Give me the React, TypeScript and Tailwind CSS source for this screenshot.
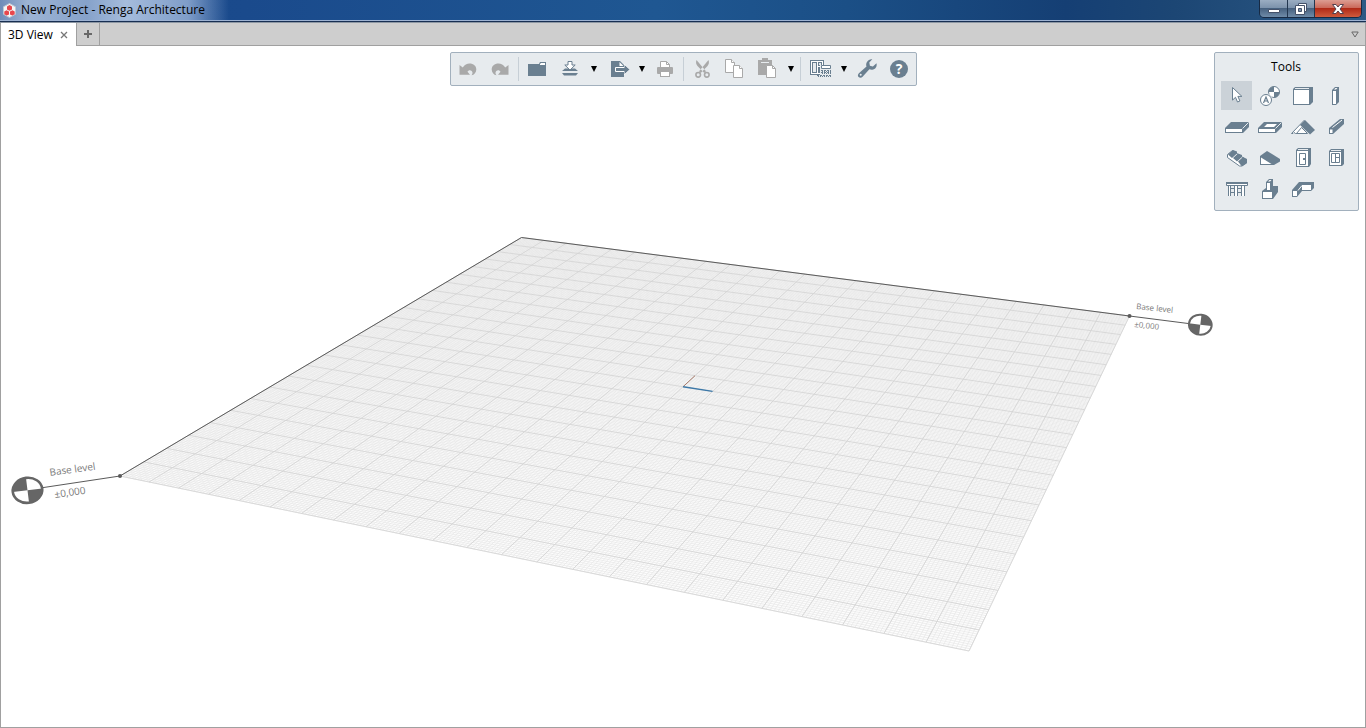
import { ReactNode, useState } from 'react';

type Point = [number, number];

interface Tool {
  id: string;
  label: string;
  icon: ReactNode;
}

const SLATE = '#6a7f90';
const GRAY = '#a9a9a9';

// Corners of the base level plane: back, right, front, left
const CORNERS: Point[] = [[521.5, 237.5], [1129.5, 316], [969, 651], [120, 476]];
const CELLS = 24;
const SUBCELLS = 10;

// Perspective projection of the unit square onto the plane
function createProjection([p0, p1, p2, p3]: Point[]) {
  const dx1 = p1[0] - p2[0];
  const dy1 = p1[1] - p2[1];
  const dx2 = p3[0] - p2[0];
  const dy2 = p3[1] - p2[1];
  const dx3 = p0[0] - p1[0] + p2[0] - p3[0];
  const dy3 = p0[1] - p1[1] + p2[1] - p3[1];
  const det = dx1 * dy2 - dx2 * dy1;
  const g = (dx3 * dy2 - dx2 * dy3) / det;
  const h = (dx1 * dy3 - dx3 * dy1) / det;
  return (u: number, v: number): Point => {
    const w = 1 + g * u + h * v;
    return [
      ((p1[0] - p0[0] + g * p1[0]) * u + (p3[0] - p0[0] + h * p3[0]) * v + p0[0]) / w,
      ((p1[1] - p0[1] + g * p1[1]) * u + (p3[1] - p0[1] + h * p3[1]) * v + p0[1]) / w,
    ];
  };
}

const project = createProjection(CORNERS);

function segment(u1: number, v1: number, u2: number, v2: number) {
  const [x1, y1] = project(u1, v1);
  const [x2, y2] = project(u2, v2);
  return `M${x1.toFixed(2)} ${y1.toFixed(2)}L${x2.toFixed(2)} ${y2.toFixed(2)}`;
}

function gridPath(count: number) {
  let d = '';
  for (let i = 0; i <= count; i++) {
    const t = i / count;
    d += segment(t, 0, t, 1) + segment(0, t, 1, t);
  }
  return d;
}

const minorGrid = gridPath(CELLS * SUBCELLS);
const majorGrid = gridPath(CELLS);

const undoPath =
  'M7.5 12l3.3 2.6C12.4 12 15 10.5 17.5 10.5c4 0 6.8 2.6 6.8 5.9 0 3-2 5.4-4.8 5.8 1.2-1.4 1.4-3.2.2-4.3-1.5-1.2-3.6-.6-4.2.9L18 21.8H7.5z';

const icons = {
  undo: <path d={undoPath} fill={GRAY} />,
  redo: <path d={undoPath} fill={GRAY} transform="translate(32 0) scale(-1 1)" />,
  open: (
    <>
      <path d="M7 11h11l1-2h6v14H7z" fill={SLATE} />
      <path d="M19 12v-1l1-1h4v2z" fill="#fff" />
    </>
  ),
  import: (
    <>
      <path d="M9 18l3-2.5h10l3 2.5zM9 20h16l-2 2.500H11z" fill={SLATE} />
      <path d="M15 8.5h4v3.5h3.2L17 17l-5.2-5H15z" fill="#fff" stroke={SLATE} />
    </>
  ),
  export: (
    <>
      <path d="M10 8h9l4 4v12H10z" fill={SLATE} />
      <path d="M18.5 9v4h4z" fill="#fff" />
      <path d="M14.5 14.5h9v-3l5 5-5 5v-3h-9z" fill={SLATE} stroke="#fff" />
      <path d="M23.500 12v9l5-4.500z" fill={SLATE} />
    </>
  ),
  print: (
    <>
      <path d="M11.5 14V8.5h6l3 3V14" fill="#fff" stroke={GRAY} />
      <path d="M17.5 8.5v3h3" fill="none" stroke={GRAY} />
      <rect x="8" y="14" width="16" height="7" rx="1" fill={GRAY} />
      <rect x="11.5" y="18.5" width="9" height="5" fill="#fff" stroke={GRAY} />
    </>
  ),
  cut: (
    <>
      <path d="M10.500 7c-1 2.500-.2 4.500 1 6l6.800 7 1.700-1.700zM22.500 7c1 2.500.2 4.500-1 6l-6.800 7-1.700-1.700z" fill={GRAY} />
      <circle cx="12.200" cy="21.800" r="2.300" fill="none" stroke={GRAY} strokeWidth="1.600" />
      <circle cx="20.800" cy="21.800" r="2.300" fill="none" stroke={GRAY} strokeWidth="1.600" />
    </>
  ),
  copy: (
    <g fill="#fff" stroke={GRAY}>
      <path d="M7.5 6.5h6l3 3v10h-9z" />
      <path d="M13.5 6.5v3h3" />
      <path d="M15.5 12.5h6l3 3v9h-9z" />
      <path d="M21.5 12.5v3h3" />
    </g>
  ),
  paste: (
    <>
      <path d="M8 7h4V5h6v2h4v15H8z" fill={GRAY} />
      <path d="M11 9.5h8" stroke="#e7ebee" />
      <path d="M16.500 12.500h6l3 3v9h-9z" fill="#fff" stroke={GRAY} />
      <path d="M22.500 12.500v3h3" fill="none" stroke={GRAY} />
    </>
  ),
  styles: (
    <>
      <path d="M7 7h14v15H7z" fill={SLATE} />
      <path d="M8 8h12v13H8z" fill="#fff" />
      <path d="M9 9h5v11H9zM15 9h4v4h-4zM15 14h4v6h-4z" fill={SLATE} />
      <path d="M10 10h3v9h-3zM16 10h2v2h-2z" fill="#e7ebee" />
      <path d="M17 12h11v12H17z" fill="#e7ebee" />
      <path d="M18.5 12.500h9v3h-9z" fill="#fff" stroke={SLATE} />
      <path d="M18 17.500h10M18 19.500h10M14 22.500h14" stroke={SLATE} strokeDasharray="2 1" />
      <path d="M19 18.500h9M19 20.500h9M15 23.500h13" stroke={SLATE} strokeDasharray="1 1" />
    </>
  ),
  settings: (
    <path
      d="M21.3 6.3l-3 3.3.6 3.2 3 .6 3.6-3.2c.8 3.2-1 6.2-4.3 6.500-1 .1-2-.1-2.800-.4l-6.800 7.500c-1.300 1.300-3 1.200-4 .2-1-1.100-.9-2.700.3-3.800l7.600-6.600c-1.300-3.600 1.800-8 5.800-7.300zM9.700 20.800a1 1 0 100 2 1 1 0 000-2z"
      fill={SLATE}
      fillRule="evenodd"
    />
  ),
  help: (
    <>
      <circle cx="16" cy="16" r="9" fill={SLATE} />
      <text x="16" y="21" textAnchor="middle" fontSize="14" fontWeight="700" fill="#fff">?</text>
    </>
  ),
};

const tools: Tool[] = [
  {
    id: 'select',
    label: 'Select',
    icon: <path d="M11.5 6.5v12.6l3-2.8 2 4.7 2.4-1-2-4.6h4z" fill="#fff" stroke={SLATE} />,
  },
  {
    id: 'level',
    label: 'Level',
    icon: (
      <>
        <circle cx="20" cy="11" r="5.5" fill="#fff" stroke={SLATE} />
        <path d="M20 11V5.5A5.5 5.5 0 0014.5 11zM20 11v5.5a5.5 5.5 0 005.5-5.5z" fill={SLATE} />
        <circle cx="12" cy="19" r="6.8" fill="#e7ebee" />
        <circle cx="12" cy="19" r="5.5" fill="#fff" stroke={SLATE} />
        <path d="M9.5 22L12 16l2.5 6M10.500 20h3" fill="none" stroke={SLATE} strokeWidth="1.2" />
      </>
    ),
  },
  {
    id: 'wall',
    label: 'Wall',
    icon: (
      <>
        <path d="M6 8l2-2h18v15l-3 3H6z" fill={SLATE} />
        <path d="M7 9h15v14H7z" fill="#fff" />
        <path d="M8 7.500h14" stroke="#e7ebee" />
      </>
    ),
  },
  {
    id: 'column',
    label: 'Column',
    icon: (
      <>
        <path d="M12 9l3-3h4v15l-3 3h-4z" fill={SLATE} />
        <path d="M13 10h3v13h-3z" fill="#fff" />
        <path d="M14 8.500l1.500-1.500h2l-1.500 1.500z" fill="#fff" />
      </>
    ),
  },
  {
    id: 'floor',
    label: 'Floor',
    icon: (
      <>
        <path d="M4 16l6-6h18v5l-6 6H4z" fill={SLATE} />
        <path d="M5 17h16v3H5z" fill="#fff" />
        <path d="M21.500 16.500l6-6" stroke="#e7ebee" />
      </>
    ),
  },
  {
    id: 'opening',
    label: 'Opening',
    icon: (
      <>
        <path d="M4 16l6-6h18v5l-6 6H4z" fill={SLATE} />
        <path d="M5 17h16v3H5zM10 15l3-3h10l-3 3z" fill="#fff" />
        <path d="M21.500 16.500l6-6" stroke="#e7ebee" />
      </>
    ),
  },
  {
    id: 'roof',
    label: 'Roof',
    icon: (
      <>
        <path d="M4.500 21.500L17 8.500l3 3-9.500 10h-2l-1.500-1-1 1z" fill="#fff" stroke={SLATE} />
        <path d="M9.500 21.500l5-6 6 6z" fill="#fff" stroke={SLATE} />
        <path d="M13 13l5-5 10 10-5 4.500z" fill={SLATE} />
      </>
    ),
  },
  {
    id: 'beam',
    label: 'Beam',
    icon: (
      <>
        <path d="M9 16L20 7h4v5L13 22H9z" fill={SLATE} />
        <path d="M10 17.5h2.5V21H10z" fill="#fff" />
        <path d="M12.5 15.5L22 8" stroke="#fff" />
      </>
    ),
  },
  {
    id: 'stair',
    label: 'Stair',
    icon: (
      <>
        <path d="M6.500 11.500l5-4 14 9.500v3l-5 3h-2l-12-8.500z" fill="#fff" stroke={SLATE} />
        <path d="M7 11.500L12 7l4 1.500v2L11 15zM12 15l5-4.500 4 1.500v2L16 18.500zM17 18.500l5-4.500 4 2v4l-5 3.500z" fill={SLATE} />
      </>
    ),
  },
  {
    id: 'ramp',
    label: 'Ramp',
    icon: (
      <>
        <path d="M6 13l7-5 13 8v2.500L20 22H6z" fill={SLATE} />
        <path d="M7 14.500L17.500 21H7z" fill="#fff" />
      </>
    ),
  },
  {
    id: 'door',
    label: 'Door',
    icon: (
      <>
        <path d="M9 7l2-2h13v16l-2 3H9z" fill={SLATE} />
        <path d="M10 8h11v15H10z" fill="#fff" />
        <path d="M12.500 10.500h6v11h-6z" fill="none" stroke={SLATE} />
        <path d="M16 15h2v2h-2z" fill={SLATE} />
        <path d="M11 6.500h10" stroke="#e7ebee" />
      </>
    ),
  },
  {
    id: 'window',
    label: 'Window',
    icon: (
      <>
        <path d="M9 8l2-2h13v15l-2 2H9z" fill={SLATE} />
        <path d="M10 9h11v13H10z" fill="#fff" />
        <path d="M11.500 10.500h8v9h-8zM15.500 10.500v9M15.500 14.500h4" fill="none" stroke={SLATE} />
        <path d="M11 7.500h10" stroke="#e7ebee" />
      </>
    ),
  },
  {
    id: 'railing',
    label: 'Railing',
    icon: (
      <>
        <path d="M5.500 8.500h21v3h-21z" fill="#fff" stroke={SLATE} />
        <path d="M5 8h22v2H5z" fill={SLATE} />
        <path d="M8 12h2v10H8zM14 12h2v10h-2zM21 12h2v10h-2z" fill="#fff" />
        <path d="M7.500 12v10M9.500 12v10M13.500 12v10M16.500 12v10M20.500 12v10M23.500 12v10M10 14.500h3M17 14.500h3M10 18.500h3M17 18.500h3" stroke={SLATE} />
      </>
    ),
  },
  {
    id: 'footing',
    label: 'Footing',
    icon: (
      <>
        <path d="M8 17l4-3V8l3-3h4v7h5v6l-5 7H8z" fill={SLATE} />
        <path d="M13 9h3v7h-3zM9 18h9v6H9z" fill="#fff" />
        <path d="M14 7.500L15.500 6h2L16 7.500z" fill="#fff" />
      </>
    ),
  },
  {
    id: 'profile',
    label: 'Profile',
    icon: (
      <>
        <path d="M5 16l7-8h15v6l-3 3h-9l-5 6H5z" fill={SLATE} />
        <path d="M6 17h4v5H6zM15 11h9v5h-9z" fill="#fff" />
        <path d="M11 16.500l4-5" stroke="#fff" />
      </>
    ),
  },
];

function ToolbarButton({ label, children }: { label: string; children: ReactNode }) {
  return (
    <button aria-label={label} title={label} className="h-8 w-8 hover:bg-[#d3d9de]">
      <svg viewBox="0 0 32 32" className="h-8 w-8">{children}</svg>
    </button>
  );
}

function MenuArrow({ label }: { label: string }) {
  return (
    <button aria-label={label} className="flex h-8 w-4 items-center justify-center pl-0.5">
      <svg viewBox="0 0 6 6" className="h-[6px] w-[6px]">
        <path d="M0 0h6L3 6z" fill="#000" />
      </svg>
    </button>
  );
}

function Separator() {
  return <div className="mx-0.5 h-6 w-px bg-[#c7cfd6]" />;
}

function TitleBar() {
  return (
    <header className="flex h-[23px] shrink-0 justify-between border-b border-[#8e98a4] bg-[linear-gradient(90deg,#17488a_0%,#1a4a8c_18%,#1f5792_48%,#1b4f86_62%,#153f74_78%,#1c4674_86%,#2d5a85_100%)]">
      <div className="flex h-[22px] grow items-start justify-between border-b border-[#182f52]">
        <div className="flex h-[21px] grow items-start justify-between border-b border-[#9db2d2]">
          <div className="flex h-5 items-center gap-1 bg-[linear-gradient(90deg,#6f8cb8_0%,#9db4d4_12%,#86a2ca_38%,#a5bcdc_55%,#7f9dc9_82%,rgba(90,130,185,0)_100%)] pr-6 pl-0.5">
            <svg viewBox="0 0 15 15" className="h-[15px] w-[15px]">
              <path d="M7.500 .5l6 3.300v7.400l-6 3.300-6-3.300V3.800z" fill="#f5f5f5" stroke="#c0c8d4" />
              <path d="M7.500 2l2.500 1.400v3L7.500 7.700 5 6.400v-3zM4.500 7.200l2.500 1.400v2.800l-2.300 1.200-2.400-1.400V8.500zM10.500 7.200l2.200 1.300v2.700l-2.400 1.400L8 11.400V8.600z" fill="#e8474c" />
            </svg>
            <h1 className="text-xs whitespace-nowrap">New Project - Renga Architecture</h1>
          </div>
          <div className="mr-1 flex h-[18px] overflow-hidden rounded-b-[5px] border border-t-0 border-[#172a44]">
            <button aria-label="Minimize" className="flex w-7 items-center justify-center border-r border-[#22364f] bg-[linear-gradient(#9badc2_0%,#7d93ac_45%,#47617f_50%,#6f8ba8_100%)]">
              <svg viewBox="0 0 12 6" className="mt-1 h-[6px] w-3">
                <path d="M.5 1.500h11v3H.5z" fill="#fff" stroke="#45526a" />
              </svg>
            </button>
            <button aria-label="Restore" className="flex w-[27px] items-center justify-center border-r border-[#22364f] bg-[linear-gradient(#9badc2_0%,#7d93ac_45%,#47617f_50%,#6f8ba8_100%)]">
              <svg viewBox="0 0 12 12" className="h-3 w-3">
                <path d="M3.500 .5h8v8h-8z" fill="#fff" stroke="#45526a" />
                <path d="M.5 2.500h9v9h-9z" fill="#fff" stroke="#45526a" />
                <path d="M3.500 5.500h3v3h-3z" fill="#7d93ac" stroke="#45526a" />
              </svg>
            </button>
            <button aria-label="Close" className="flex w-[46px] items-center justify-center bg-[linear-gradient(#dc9d92_0%,#cb6a5b_45%,#b02a17_50%,#cf5b3d_100%)]">
              <svg viewBox="0 0 12 10" className="h-[10px] w-3">
                <path d="M.5 .5H4L6 3l2-2.500h3.500L8 5l3.500 4.500H8L6 7 4 9.500H.5L4 5z" fill="#fff" stroke="#54404e" />
              </svg>
            </button>
          </div>
        </div>
      </div>
    </header>
  );
}

function TabBar() {
  return (
    <nav className="flex h-[23px] shrink-0 items-stretch border-x border-b border-[#a0a0a0] bg-[#cecece]">
      <div className="-mb-px flex w-[76px] items-center justify-between border-r border-[#a0a0a0] bg-white pr-1.5 pl-[7px]">
        <a href="#view" className="text-xs whitespace-nowrap">3D View</a>
        <button aria-label="Close tab" className="flex h-3 w-3 items-center justify-center">
          <svg viewBox="0 0 8 8" className="h-2 w-2">
            <path d="M1 1l6 6M7 1L1 7" stroke="#777" strokeWidth="1.300" />
          </svg>
        </button>
      </div>
      <button aria-label="New tab" className="flex w-[23px] items-center justify-center border-r border-[#a0a0a0]">
        <svg viewBox="0 0 8 8" className="h-2 w-2">
          <path d="M4 0v8M0 4h8" stroke="#686868" strokeWidth="2" />
        </svg>
      </button>
      <button aria-label="List of tabs" className="mr-1.5 ml-auto flex items-center">
        <svg viewBox="0 0 8 7" className="h-[7px] w-2">
          <path d="M.8 1h6.400L4 6z" fill="none" stroke="#686868" />
        </svg>
      </button>
    </nav>
  );
}

function Scene() {
  return (
    <svg id="view" viewBox="1 46 1364 681" className="absolute inset-0 h-full w-full" role="img" aria-label="3D view of the base level">
      <polygon points={CORNERS.map(p => p.join(',')).join(' ')} fill="#fdfdfd" />
      <path d={minorGrid} stroke="#e6e6e6" strokeWidth="0.7" fill="none" />
      <path d={majorGrid} stroke="#d3d3d3" strokeWidth="0.8" fill="none" />
      <path d={segment(0.5, 0.5, 0.5, 0.5 - 1 / CELLS)} stroke="#a87c6c" />
      <path d={segment(0.5, 0.5, 0.5 + 1 / CELLS, 0.5)} stroke="#3c78a8" strokeWidth="1.3" />
      <path d="M27 490L120 476L521.5 237.5L1129.5 316L1200 325" stroke="#5a5a5a" fill="none" />
      <circle cx="120" cy="476" r="2" fill="#5a5a5a" />
      <circle cx="1129.5" cy="316" r="2" fill="#5a5a5a" />

      {/* Level marks */}
      <g transform="translate(27.5 490.3) rotate(-7)">
        <ellipse rx="14.8" ry="12.5" fill="#fff" stroke="#666" strokeWidth="2.6" />
        <path d="M0 0V-12.5A14.8 12.5 0 00-14.8 0zM0 0V12.5A14.8 12.5 0 0014.8 0z" fill="#666" />
      </g>
      <g transform="translate(1200.3 324.7) rotate(7)">
        <ellipse rx="11.4" ry="10" fill="#fff" stroke="#666" strokeWidth="2" />
        <path d="M0 0V-10A11.4 10 0 0111.4 0zM0 0V10A11.4 10 0 01-11.4 0z" fill="#666" />
      </g>
      <g fill="#7a7a7a">
        <text fontSize="10" transform="translate(50 476) rotate(-8)">Base level</text>
        <text fontSize="10" transform="translate(55 498) rotate(-8)">±0,000</text>
        <text fontSize="8" transform="translate(1136 309) rotate(6)">Base level</text>
        <text fontSize="8" transform="translate(1134 327) rotate(6)">±0,000</text>
      </g>
    </svg>
  );
}

function Toolbar() {
  return (
    <div className="absolute top-1.5 right-0 left-px flex justify-center">
      <div role="toolbar" className="flex items-center rounded-[2px] border border-[#a2b0bd] bg-[#e7ebee] px-px">
        <ToolbarButton label="Undo">{icons.undo}</ToolbarButton>
        <ToolbarButton label="Redo">{icons.redo}</ToolbarButton>
        <Separator />
        <ToolbarButton label="Open">{icons.open}</ToolbarButton>
        <ToolbarButton label="Import">{icons.import}</ToolbarButton>
        <MenuArrow label="Import options" />
        <ToolbarButton label="Export">{icons.export}</ToolbarButton>
        <MenuArrow label="Export options" />
        <ToolbarButton label="Print">{icons.print}</ToolbarButton>
        <Separator />
        <ToolbarButton label="Cut">{icons.cut}</ToolbarButton>
        <ToolbarButton label="Copy">{icons.copy}</ToolbarButton>
        <ToolbarButton label="Paste">{icons.paste}</ToolbarButton>
        <MenuArrow label="Paste options" />
        <Separator />
        <ToolbarButton label="Styles">{icons.styles}</ToolbarButton>
        <MenuArrow label="Style options" />
        <ToolbarButton label="Settings">{icons.settings}</ToolbarButton>
        <ToolbarButton label="Help">{icons.help}</ToolbarButton>
      </div>
    </div>
  );
}

function ToolsPanel() {
  const [active, setActive] = useState('select');

  return (
    <aside className="absolute top-1.5 right-1.5 rounded-[2px] border border-[#a2b0bd] bg-[#e7ebee] pr-[7px] pb-[7px] pl-1.5">
      <h2 className="h-7 text-center text-xs leading-7">Tools</h2>
      <div className="grid grid-cols-4 gap-0.5">
        {tools.map(tool => (
          <button
            key={tool.id}
            aria-label={tool.label}
            title={tool.label}
            onClick={() => setActive(tool.id)}
            className={active === tool.id ? 'bg-[#cbd2d8]' : 'hover:bg-[#d9dee3]'}
          >
            <svg viewBox="0 0 31 29" className="h-[29px] w-[31px]">{tool.icon}</svg>
          </button>
        ))}
      </div>
    </aside>
  );
}

export default function App() {
  return (
    <div className="flex h-screen flex-col bg-white font-['Open_Sans','Noto_Sans',sans-serif] text-black">
      <TitleBar />
      <TabBar />
      <main className="relative grow overflow-hidden border-x border-b border-[#a0a0a0]">
        <Scene />
        <Toolbar />
        <ToolsPanel />
      </main>
    </div>
  );
}
